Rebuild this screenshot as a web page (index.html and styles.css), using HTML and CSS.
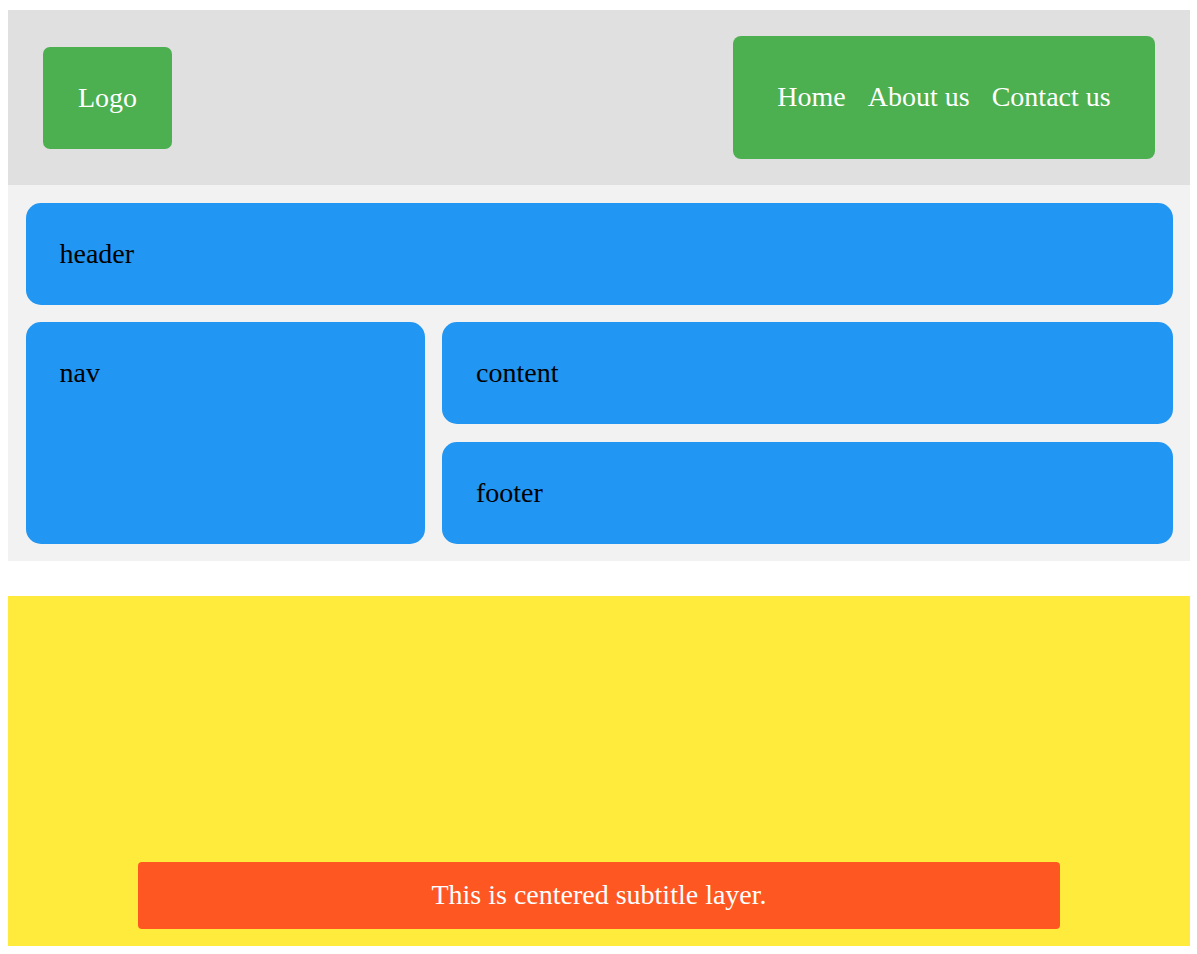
FILE: index.html
```html
<!DOCTYPE html>
<html lang="en">
<head>
<meta charset="utf-8">
<title>Layout demo</title>
<link rel="stylesheet" href="styles.css">
</head>
<body>
  <div class="topbar">
    <div class="logo">Logo</div>
    <nav class="menu">
      <a class="menu-item">Home</a>
      <a class="menu-item">About us</a>
      <a class="menu-item">Contact us</a>
    </nav>
  </div>

  <div class="grid">
    <div class="cell cell-header">header</div>
    <div class="cell cell-nav">nav</div>
    <div class="cell cell-content">content</div>
    <div class="cell cell-footer">footer</div>
  </div>

  <div class="stage">
    <div class="subtitle">This is centered subtitle layer.</div>
  </div>
</body>
</html>
```

FILE: styles.css
```css
html, body {
  background: #ffffff;
}

body {
  margin: 10px 7px 8px 8px;
  font-family: "Liberation Serif", "Times New Roman", serif;
  font-size: 28px;
  line-height: 32px;
}

.topbar {
  display: flex;
  align-items: center;
  justify-content: space-between;
  background: #e0e0e0;
  padding: 26px 35px;
  height: 175px;
  box-sizing: border-box;
}

.logo {
  background: #4caf50;
  color: #ffffff;
  padding: 35px;
  border-radius: 7px;
}

.menu {
  display: flex;
  justify-content: center;
  width: 422px;
  box-sizing: border-box;
  background: #4caf50;
  border-radius: 8px;
  padding: 45px 0 46px;
}

.menu-item {
  color: #ffffff;
  padding: 0 11px;
  white-space: nowrap;
  flex-shrink: 0;
}

.grid {
  display: grid;
  grid-template-columns: 399px 1fr;
  grid-template-rows: 102px 102px 102px;
  gap: 17.5px;
  padding: 17.5px;
  background: #f2f2f2;
}

.cell {
  background: #2196f3;
  color: #000000;
  border-radius: 15px;
  padding: 35px 34px;
  box-sizing: border-box;
}

.cell-header {
  grid-column: 1 / 3;
}

.cell-nav {
  grid-column: 1;
  grid-row: 2 / 4;
}

.cell-content {
  grid-column: 2;
  grid-row: 2;
}

.cell-footer {
  grid-column: 2;
  grid-row: 3;
}

.stage {
  margin-top: 35px;
  height: 350px;
  background: #ffeb3b;
  display: flex;
  align-items: flex-end;
  justify-content: center;
  padding-bottom: 17px;
  box-sizing: border-box;
}

.subtitle {
  width: 78%;
  background: #ff5722;
  color: #ffffff;
  text-align: center;
  padding: 17px 0 18px;
  border-radius: 4px;
}
```
